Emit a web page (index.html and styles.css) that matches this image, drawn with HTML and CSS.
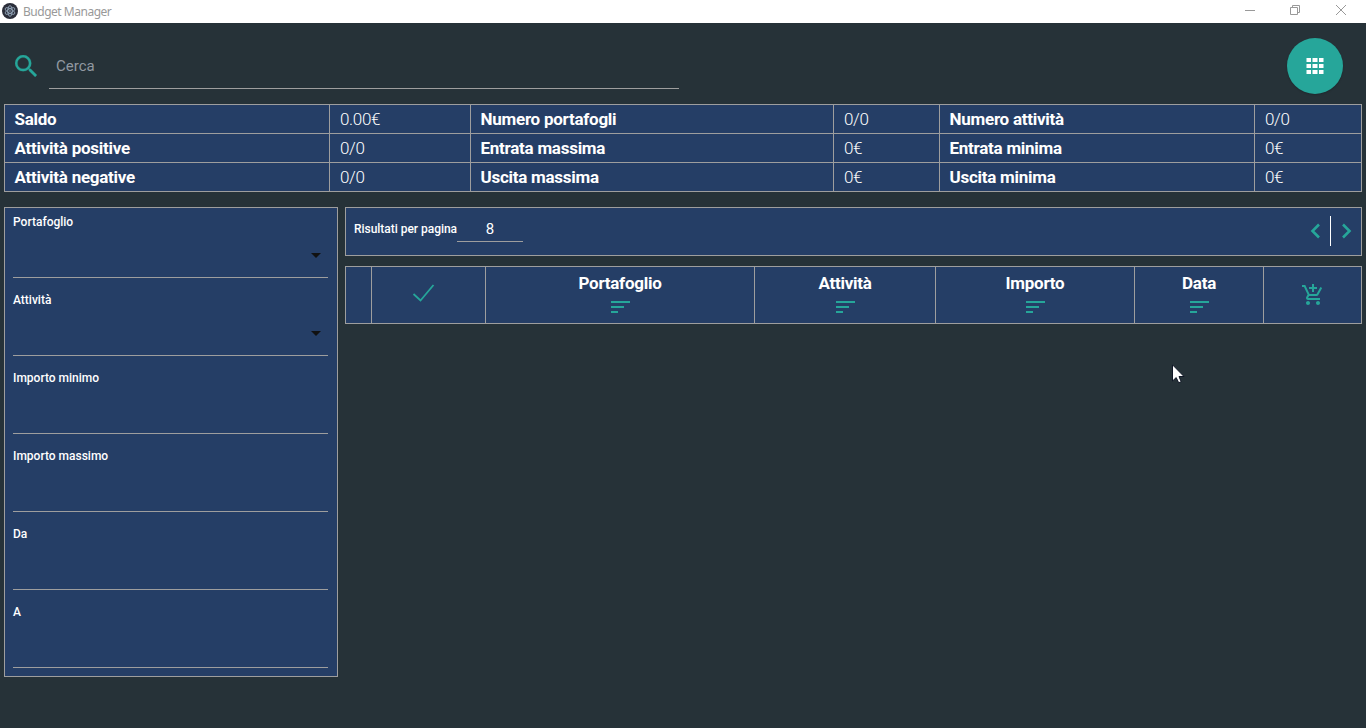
FILE: index.html
```html
<!DOCTYPE html>
<html lang="it">
<head>
<meta charset="utf-8">
<title>Budget Manager</title>
<link rel="stylesheet" href="styles.css">
</head>
<body>
<svg class="defs" width="0" height="0">
  <symbol id="sort" viewBox="0 0 20 12"><path d="M0 0H19V2H0ZM0 5H13V7H0ZM0 10H7V12H0Z"/></symbol>
</svg>
<header class="titlebar">
  <svg class="app-icon" viewBox="0 0 16 16" width="16" height="16">
    <circle cx="8" cy="8" r="8" fill="#2b2e3a"/>
    <g fill="none" stroke="#9fb4c8" stroke-width=".8">
      <ellipse cx="8" cy="8" rx="5.400" ry="2.200" transform="rotate(30 8 8)"/>
      <ellipse cx="8" cy="8" rx="5.400" ry="2.200" transform="rotate(90 8 8)"/>
      <ellipse cx="8" cy="8" rx="5.400" ry="2.200" transform="rotate(150 8 8)"/>
    </g>
    <circle cx="8" cy="8" r=".8" fill="#9fb4c8"/>
  </svg>
  <span class="title">Budget Manager</span>
  <div class="controls">
    <svg viewBox="0 0 46 22" width="46" height="22"><path d="M17 10.500H27"/></svg>
    <svg viewBox="0 0 46 22" width="46" height="22"><path d="M16.500 7.500H23.500V14.500H16.500ZM18.500 7.500V5.500H25.500V12.500H23.500"/></svg>
    <svg viewBox="0 0 46 22" width="46" height="22"><path d="M16 5L26 15M26 5L16 15"/></svg>
  </div>
</header>
<div class="search">
  <svg class="search-icon" viewBox="3 3 17.500 17.500" width="22" height="22"><path d="M15.500 14h-.79l-.28-.27A6.471 6.471 0 0 0 16 9.500 6.500 6.500 0 1 0 9.500 16c1.610 0 3.090-.59 4.230-1.570l.27.28v.79l5 4.990L20.490 19l-4.990-5zm-6 0C7.010 14 5 11.990 5 9.500S7.010 5 9.500 5 14 7.010 14 9.500 11.990 14 9.500 14z"/></svg>
  <div class="search-field">Cerca</div>
  <button class="fab" aria-label="Menu"><svg viewBox="0 0 18 16" width="18" height="16"><path d="M0.500 0h4.500v4H.5zM6.500 0H11.500v4H6.500zM13 0h4.500v4H13zM.5 6h4.500v4H.5zM6.500 6H11.500v4H6.500zM13 6h4.500v4H13zM.5 12h4.500v4H.5zM6.500 12H11.500v4H6.500zM13 12h4.500v4H13z"/></svg></button>
</div>
<section class="summary">
  <b>Saldo</b><span>0.00€</span><b>Numero portafogli</b><span>0/0</span><b>Numero attività</b><span>0/0</span>
  <b>Attività positive</b><span>0/0</span><b>Entrata massima</b><span>0€</span><b>Entrata minima</b><span>0€</span>
  <b>Attività negative</b><span>0/0</span><b>Uscita massima</b><span>0€</span><b>Uscita minima</b><span>0€</span>
</section>
<main class="content">
  <aside class="filters">
    <div class="field select"><label>Portafoglio</label></div>
    <div class="field select"><label>Attività</label></div>
    <div class="field"><label>Importo minimo</label></div>
    <div class="field"><label>Importo massimo</label></div>
    <div class="field"><label>Da</label></div>
    <div class="field"><label>A</label></div>
  </aside>
  <div class="results">
    <div class="pager">
      <label>Risultati per pagina</label><div class="count">8</div>
      <div class="arrows">
        <svg viewBox="0 0 9 15" width="9" height="15"><path d="M8 1.500L1.500 8L8 14.500"/></svg>
        <i></i>
        <svg viewBox="0 0 9 15" width="9" height="15"><path d="M1 1.500L7.500 8L1 14.500"/></svg>
      </div>
    </div>
    <div class="columns">
      <div></div>
      <div class="check"><svg viewBox="0 0 23 18" width="23" height="18"><path d="M1.500 10L8.500 16.500L21.500 1"/></svg></div>
      <div class="column">Portafoglio<svg width="20" height="12"><use href="#sort"/></svg></div>
      <div class="column">Attività<svg width="20" height="12"><use href="#sort"/></svg></div>
      <div class="column">Importo<svg width="20" height="12"><use href="#sort"/></svg></div>
      <div class="column">Data<svg width="20" height="12"><use href="#sort"/></svg></div>
      <div class="cart"><svg viewBox="0 0 24 24" width="24" height="24"><path d="M11 9h2V6h3V4h-3V1h-2v3H8v2h3v3zm-4 9c-1.100 0-1.990.9-1.990 2S5.900 22 7 22s2-.9 2-2-.9-2-2-2zm10 0c-1.100 0-1.990.9-1.990 2s.89 2 1.990 2 2-.9 2-2-.9-2-2-2zm-9.830-3.250l.03-.12.9-1.630h7.450c.75 0 1.410-.41 1.750-1.030l3.860-7.010L19.420 4h-.01l-1.100 2-2.760 5H8.530l-.13-.27L6.160 6l-.95-2-.94-2H1v2h2l3.600 7.590-1.350 2.450c-.16.28-.25.61-.25.96 0 1.100.9 2 2 2h12v-2H7.420c-.13 0-.25-.11-.25-.25z"/></svg></div>
    </div>
  </div>
</main>
<svg class="cursor" viewBox="0 0 13 20" width="13" height="20"><path d="M.5.8V17L4.200 13.600L6.700 18.800L9.200 17.700L7 12.500H12Z"/></svg>
</body>
</html>
```
FILE: styles.css
```css
* { box-sizing: border-box; }
body {
  margin: 0;
  height: 728px;
  overflow: hidden;
  background: #263238;
  color: #fff;
  font-family: Roboto, sans-serif;
  font-size: 17px;
}
svg { display: block; }
.defs { position: absolute; }
.titlebar {
  display: flex;
  height: 23px;
  padding-left: 2px;
  background: #fff;
}
.app-icon { margin: 3px 5px 0 0; }
.title { color: #999; font: 12px/24px "Noto Sans", sans-serif; letter-spacing: -.48px; }
.controls { display: flex; margin-left: auto; }
.controls svg { fill: none; stroke: #999; stroke-width: 1; }
.search { display: flex; height: 81px; padding: 15px 23px 0 15px; }
.search-icon { margin-top: 17px; fill: #26a69a; stroke: #26a69a; stroke-width: .15; }
.search-field {
  width: 630px;
  height: 51px;
  margin-left: 12px;
  padding: 5px 7px 0;
  border-bottom: 1px solid #9e9e9e;
  color: #9198a0;
  font-size: 15px;
  line-height: 46px;
}
.fab {
  display: grid;
  place-items: center;
  width: 56px;
  height: 56px;
  margin-left: auto;
  padding: 0;
  border: 0;
  border-radius: 50%;
  background: #26a69a;
  box-shadow: 0 1px 2px #0003;
}
.fab svg { fill: #fff; }
.summary {
  display: grid;
  grid-template-columns: 324px 140px 362px 105px 314px 106px;
  grid-auto-rows: 28px;
  gap: 1px;
  width: 1358px;
  margin-left: 4px;
  padding: 1px;
  background: #9e9e9e;
}
.summary > * { background: #253e66; line-height: 29px; }
.summary b { padding-left: 9.500px; font-weight: 700; letter-spacing: -.26px; }
.summary span { padding-left: 10px; font-weight: 300; letter-spacing: -.35px; }
.content { display: flex; gap: 7px; margin: 15px 4px 0; }
.filters {
  width: 334px;
  height: 470px;
  padding: 0 9px 0 8px;
  border: 1px solid #9e9e9e;
  background: #253e66;
}
.field {
  position: relative;
  height: 78px;
  padding-top: 14px;
  border-bottom: 1px solid #9e9e9e;
}
.field:first-child { height: 70px; padding-top: 6px; }
.field label, .pager label { display: block; font-size: 12px; font-weight: 500; line-height: 16px; }
.select::after {
  content: "";
  position: absolute;
  right: 7px;
  bottom: 19px;
  border: 5px solid transparent;
  border-top-color: #111;
  border-bottom: 0;
}
.results { flex: 1; }
.pager {
  display: flex;
  height: 49px;
  padding: 0 10px 0 8px;
  border: 1px solid #9e9e9e;
  background: #253e66;
}
.pager label { width: 103px; padding-top: 13px; white-space: nowrap; letter-spacing: -.03px; }
.count {
  width: 66px;
  height: 34px;
  border-bottom: 1px solid #9e9e9e;
  font-size: 15px;
  line-height: 42px;
  text-align: center;
}
.arrows { display: flex; margin-left: auto; }
.arrows svg { margin-top: 15px; overflow: visible; fill: none; stroke: #26a69a; stroke-width: 2.6; }
.arrows i { width: 1px; height: 30px; margin: 8px 11px 0 10px; background: #fff; }
.columns {
  display: grid;
  grid-template-columns: 25px 113px 268px 180px 198px 128px 97px;
  grid-auto-rows: 56px;
  gap: 1px;
  margin-top: 10px;
  padding: 1px;
  background: #9e9e9e;
}
.columns > div { background: #253e66; }
.column {
  padding-top: 6px;
  font-weight: 700;
  letter-spacing: -.26px;
  line-height: 21px;
  text-align: center;
}
.column svg { margin: 7px auto 0; position: relative; left: 1px; fill: #26a69a; }
.check svg { margin: 17px 0 0 40px; fill: none; stroke: #26a69a; stroke-width: 1.8; }
.cart svg { margin: 16px auto 0; fill: #26a69a; }
.cursor { position: absolute; left: 1172px; top: 364px; fill: #fff; stroke: #111827; stroke-width: 1; }
```
